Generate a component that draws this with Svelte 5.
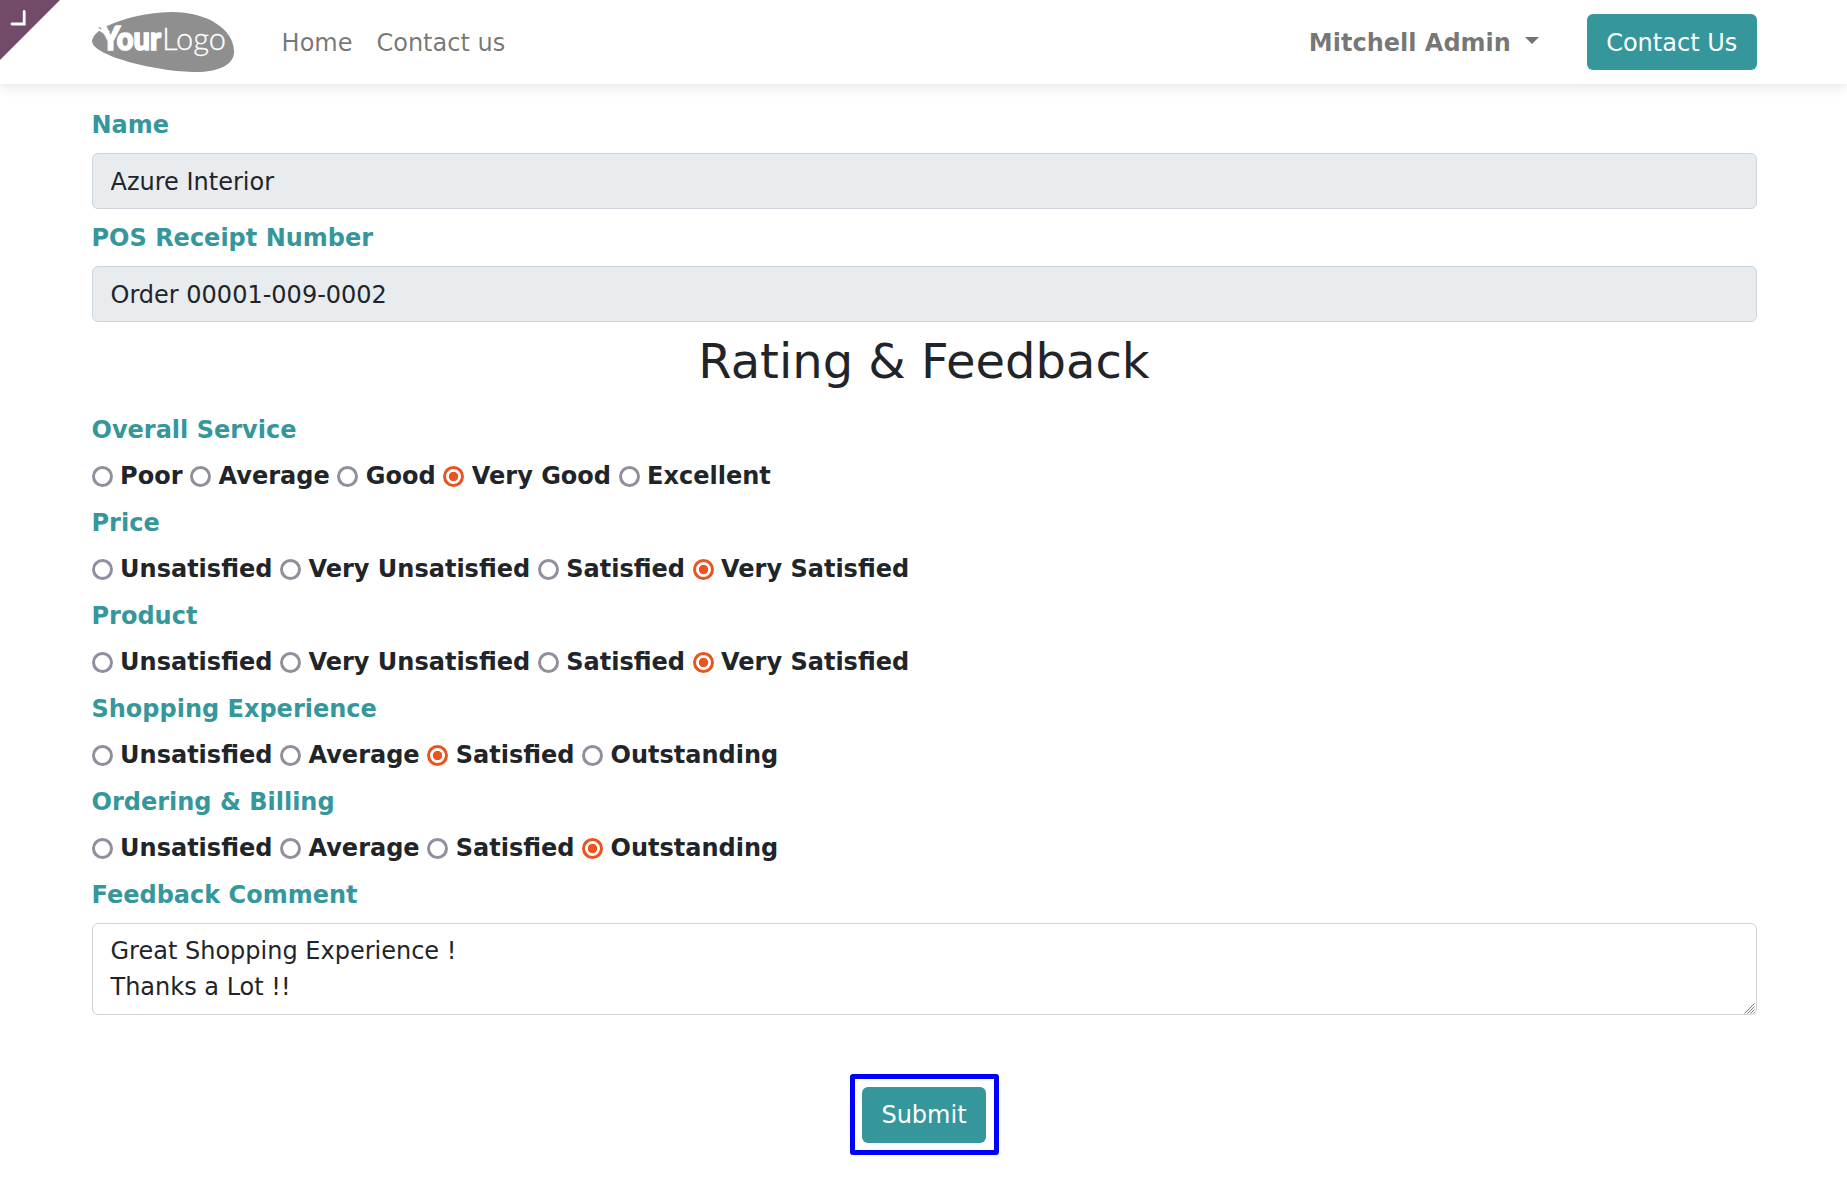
<script>
  const groups = [
    { title: 'Overall Service', options: ['Poor', 'Average', 'Good', 'Very Good', 'Excellent'], selected: 'Very Good' },
    { title: 'Price', options: ['Unsatisfied', 'Very Unsatisfied', 'Satisfied', 'Very Satisfied'], selected: 'Very Satisfied' },
    { title: 'Product', options: ['Unsatisfied', 'Very Unsatisfied', 'Satisfied', 'Very Satisfied'], selected: 'Very Satisfied' },
    { title: 'Shopping Experience', options: ['Unsatisfied', 'Average', 'Satisfied', 'Outstanding'], selected: 'Satisfied' },
    { title: 'Ordering & Billing', options: ['Unsatisfied', 'Average', 'Satisfied', 'Outstanding'], selected: 'Outstanding' }
  ];
  let comment = $state('Great Shopping Experience !\nThanks a Lot !!');
</script>

<header>
  <svg class="corner" viewBox="0 0 60 60" aria-hidden="true">
    <path d="M0 0H60L0 60Z" fill="#714b67" />
    <path d="M12 24H24.2V11.5" fill="none" stroke="#fff" stroke-width="2.8" stroke-linecap="round" stroke-linejoin="miter" />
  </svg>
  <nav>
    <svg class="logo" viewBox="0 0 142 60" role="img" aria-label="Your Logo">
      <path d="M0 29C1 14 46 0 80 0C115 0 142 17 142 40C142 53 126 60 104 60C66 60 0 44 0 29Z" fill="#8f8f8f" />
      <path d="M7 18.5L10 15.8H14L18 20L12 22Z" fill="#fff" />
      <path d="M6 15.2H12L9 17.5Z" fill="#8f8f8f" />
      <text class="your" x="9" y="37.6" textLength="60" lengthAdjust="spacingAndGlyphs">Your</text>
      <text class="brand" x="70" y="38" textLength="64" lengthAdjust="spacingAndGlyphs">Logo</text>
    </svg>
    <a class="home" href="#home">Home</a>
    <a class="contact" href="#contact">Contact us</a>
    <button class="user">Mitchell Admin<i class="caret"></i></button>
    <button class="btn">Contact Us</button>
  </nav>
</header>

<main>
  <label for="name">Name</label>
  <input class="field" id="name" value="Azure Interior" readonly />
  <label for="receipt">POS Receipt Number</label>
  <input class="field" id="receipt" value="Order 00001-009-0002" readonly />

  <h1>Rating &amp; Feedback</h1>

  {#each groups as group}
    <section>
      <h2>{group.title}</h2>
      <div class="options">
        {#each group.options as option}
          <label class="option">
            <input type="radio" name={group.title} value={option} checked={option === group.selected} />
            <span>{option}</span>
          </label>
        {/each}
      </div>
    </section>
  {/each}

  <h2>Feedback Comment</h2>
  <div class="comment">
    <textarea rows="2" bind:value={comment}></textarea>
    <svg class="grip" viewBox="0 0 11 11" aria-hidden="true">
      <path d="M0.5 10.5L10.5 0.5M3.5 10.5L10.5 3.5M6.5 10.5L10.5 6.5M9.3 10.5L10.5 9.3" fill="none" stroke="#777" stroke-width="1" />
    </svg>
  </div>

  <div class="submit"><button class="btn">Submit</button></div>
</main>

<style>
  :global(body) {
    background: #fff;
    color: #212529;
    font: 24px/36px 'DejaVu Sans', sans-serif;
  }
  input, textarea, button { font: inherit; color: inherit; box-sizing: border-box; margin: 0; }
  header {
    position: relative;
    height: 84px;
    box-shadow: 0 3px 12px rgba(0, 0, 0, 0.11);
  }
  .corner { position: absolute; left: 0; top: 0; width: 60px; height: 60px; }
  nav, main { width: 1665px; margin-left: 91.5px; }
  nav { height: 84px; display: flex; align-items: center; }
  .logo { width: 142px; height: 60px; margin-left: 0.5px; }
  .logo text { fill: #fff; font-size: 32px; }
  .your { font-family: Lato, sans-serif; font-weight: 900; stroke: #fff; stroke-width: 1.6px; }
  .brand { font-family: Lato, sans-serif; font-weight: 300; stroke: #fff; stroke-width: 0.3px; }
  nav a { padding-top: 2px; color: rgba(0, 0, 0, 0.55); text-decoration: none; }
  .home { margin-left: 47.6px; }
  .contact { margin-left: 24px; }
  button { border: 0; }
  .user {
    display: flex;
    align-items: center;
    margin: 0 48px 0 auto;
    padding: 2px 0 0;
    background: none;
    color: rgba(0, 0, 0, 0.55);
    font-weight: 700;
  }
  .caret {
    margin: -6px 0 0 14px;
    border: 7px solid transparent;
    border-top-color: currentColor;
    border-bottom: 0;
  }
  .btn {
    height: 56px;
    padding: 0 19.25px;
    border-radius: 6px;
    background: #35979c;
    color: #fff;
  }
  nav .btn { padding-top: 2px; }
  main { padding-top: 23px; }
  main > label, h2 {
    display: block;
    margin: 0;
    color: #35979c;
    font-size: 24px;
    font-weight: 700;
    line-height: 36px;
  }
  .field, textarea {
    display: block;
    width: 100%;
    padding: 9px 18px;
    border: 1px solid #ced4da;
    border-radius: 6px;
  }
  .field { height: 56px; margin: 10px 0 11px; padding: 10px 18px 8px; background: #e9ecef; }
  h1 {
    margin: -1px 0 22px;
    font-size: 48px;
    font-weight: 400;
    line-height: 58px;
    text-align: center;
  }
  section { height: 93px; }
  .options { display: flex; gap: 7.6px; margin: 10px 0 0 0.1px; font-weight: 700; }
  .option { display: flex; align-items: center; gap: 7.5px; }
  .option input {
    appearance: none;
    width: 21px;
    height: 21px;
    margin-top: 1px;
    border-radius: 50%;
    box-shadow: inset 0 0 0 3px #8f8f9d;
  }
  .option input:checked {
    background: radial-gradient(circle, #e95420 4.3px, transparent 5.1px);
    box-shadow: inset 0 0 0 3px #e95420;
  }
  .comment { position: relative; margin-top: 10px; }
  textarea { height: 92px; resize: none; background: #fff; overflow: hidden; }
  .grip { position: absolute; right: 1.5px; bottom: 1px; width: 11px; height: 11px; }
  .submit {
    display: flex;
    justify-content: center;
    align-items: center;
    box-sizing: border-box;
    width: 149px;
    height: 81px;
    margin: 59px auto 0;
    border: 5px solid #00f;
    border-radius: 3px;
  }
</style>
